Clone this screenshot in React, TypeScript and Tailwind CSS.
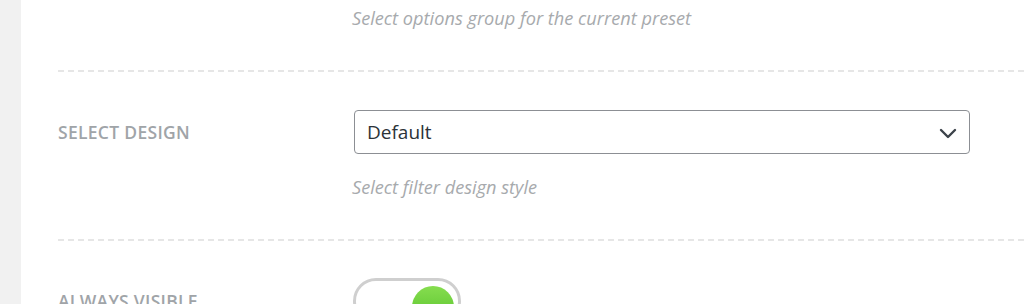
function Label({ children }: { children: React.ReactNode }) {
  return (
    <div className="w-[294px] shrink-0 text-[17.5px] font-semibold uppercase tracking-[0.3px] text-[#a0a4a8]">
      {children}
    </div>
  );
}

function Help({ children }: { children: React.ReactNode }) {
  return <p className="text-[18.2px] italic leading-[24px] text-[#a7aaad]">{children}</p>;
}

export default function App() {
  return (
    <div
      className="flex h-[304px] w-[1024px] overflow-hidden bg-white"
      style={{ fontFamily: '"Open Sans", "Noto Sans", sans-serif' }}
    >
      <div className="w-[21px] shrink-0 bg-[#f1f1f1]" />
      <div className="flex-1 pl-[37px]">
        <div className="flex pt-[6px] pb-[40px]">
          <div className="w-[294px] shrink-0" />
          <Help>Select options group for the current preset</Help>
        </div>
        <div className="border-t-2 border-dashed border-[#e6e6e6]" />

        <div className="flex pt-[38px] pb-[40px]">
          <div className="flex h-[44px] items-center">
            <Label>Select design</Label>
          </div>
          <div className="flex flex-col">
            <div className="ml-[2px] flex h-[44px] w-[616px] items-center justify-between rounded-[4px] border border-[#8c8f94] pl-[12px] pr-[12px] text-[19px] text-[#2c3338]">
              <span>Default</span>
              <svg width="18" height="11" viewBox="0 0 18 11" fill="none" className="mt-[2px]">
                <path d="M2 2 L9 9 L16 2" stroke="#3c434a" strokeWidth="2.4" strokeLinecap="round" strokeLinejoin="round" />
              </svg>
            </div>
            <div className="mt-[21px]">
              <Help>Select filter design style</Help>
            </div>
          </div>
        </div>
        <div className="border-t-2 border-dashed border-[#e6e6e6]" />

        <div className="flex pt-[37px]">
          <div className="flex h-[46px] items-center">
            <Label>Always visible</Label>
          </div>
          <div className="relative ml-[1px] h-[46px] w-[108px] rounded-full border-[3px] border-[#cfcfcf] bg-white">
            <div className="absolute top-[5px] right-[4px] h-[42px] w-[42px] rounded-full bg-gradient-to-b from-[#86dd4f] to-[#4fbf24]" />
          </div>
        </div>
      </div>
    </div>
  );
}
